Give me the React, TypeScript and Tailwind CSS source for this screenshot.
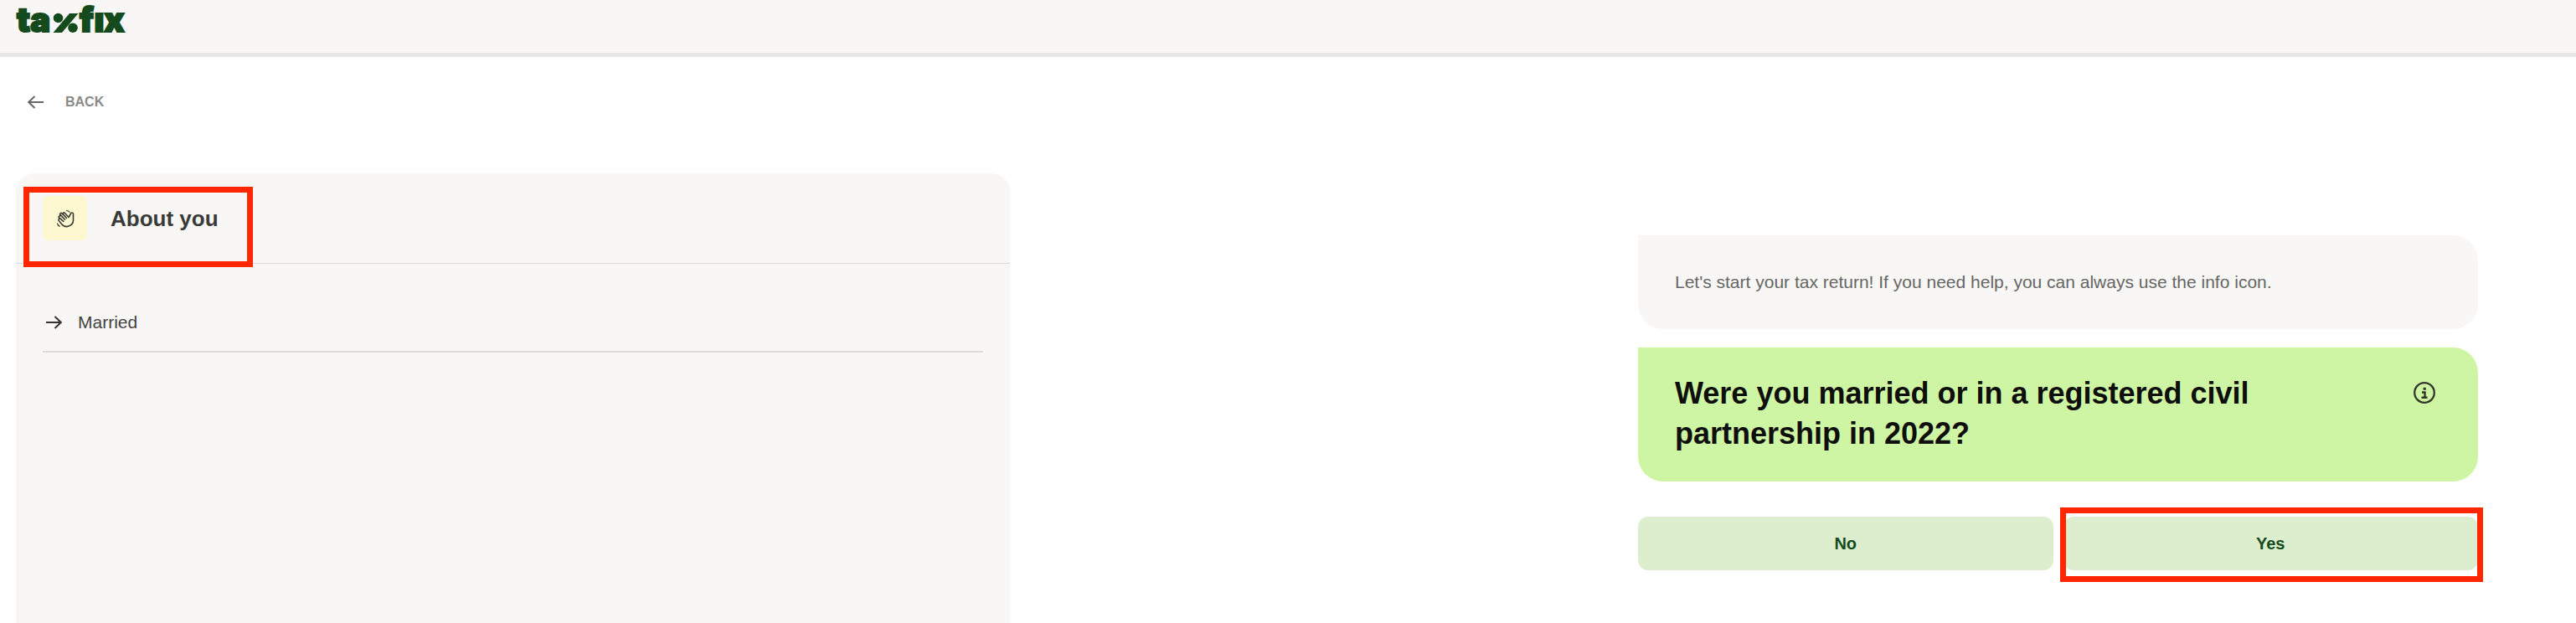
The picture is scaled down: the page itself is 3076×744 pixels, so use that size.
import React from 'react';

function Logo() {
  return (
    <svg
      className="h-[63px] w-[140px] text-[#154a1c]"
      viewBox="0 0 140 63"
      fill="currentColor"
      role="img"
      aria-label="taxfix"
    >
      <g className="font-['Inter',sans-serif] text-[40px] font-black" stroke="currentColor" strokeWidth="2">
        <text x="4" y="38">ta</text>
        <text x="79" y="38">fıx</text>
      </g>
      {/* Percent sign that stands in for the first x */}
      <circle cx="53.5" cy="21.5" r="5.8" />
      <circle cx="71" cy="33.2" r="5.8" />
      <path d="M47.5 39 67 16h10.500L58 39Z" />
    </svg>
  );
}

function WaveIcon() {
  return (
    <svg
      className="h-[22px] w-[22px] text-[#3a3a35]"
      viewBox="0 0 22 22"
      fill="none"
      stroke="currentColor"
      strokeWidth="1.6"
      strokeLinecap="round"
      strokeLinejoin="round"
      aria-hidden="true"
    >
      <path d="M15 9.5 10.2 4.3a1.3 1.3 0 0 0-2 1.6L7 4.8a1.3 1.3 0 0 0-1.9 1.8L4.9 7.8A1.3 1.3 0 0 0 3.4 9.7l.3 1.8a1.2 1.2 0 0 0-.6 1.7l3.4 4.2a7.8 7.8 0 0 0 14-4.6V5.7a1.5 1.5 0 0 0-3.2-.2L15 9.5" />
      <path d="m8.2 5.9 4.3 4.6M5.1 6.6l5.4 5.6M4.2 10.3l4.6 4.1" />
      <path d="M12.5 1.5c1.4.1 2.6.7 3.4 1.7M1.5 17c.4 1.6 1.3 2.7 2.8 3.3" strokeWidth="1.2" />
    </svg>
  );
}

function InfoIcon() {
  return (
    <svg className="h-[26px] w-[26px]" viewBox="0 0 26 26" fill="none" stroke="#33382b" aria-hidden="true">
      <circle cx="13" cy="13" r="11.8" strokeWidth="2.3" />
      <path d="M10 12.5h3.5v6M9.5 18.7h7" strokeWidth="2.4" />
      <path d="M11.6 6.8h3.2v3h-3.2z" fill="#33382b" stroke="none" />
    </svg>
  );
}

function Arrow({ className }: { className: string }) {
  return (
    <svg
      className={className}
      viewBox="0 0 20 16"
      fill="none"
      stroke="currentColor"
      strokeWidth="2"
      aria-hidden="true"
    >
      <path d="M0 8h18M10.5 1 17.8 8l-7.3 7" />
    </svg>
  );
}

// Red frame drawn over the part of the screen that needs attention
function Highlight({ className }: { className: string }) {
  return <div className={`pointer-events-none absolute border-[7px] border-[#ff2600] ${className}`} />;
}

function Sidebar() {
  return (
    <aside className="rounded-t-[22px] bg-[#f8f7f5]">
      <div className="relative flex h-27 items-center gap-7 border-b border-[#d9d9d7] px-8">
        <div className="flex h-[53px] w-[53px] items-center justify-center rounded-md bg-[#fdf8d0]">
          <WaveIcon />
        </div>
        <h2 className="text-[26px] leading-8 font-bold text-[#3a3a38]">About you</h2>
        <Highlight className="top-4 left-[9px] h-24 w-[274px]" />
      </div>

      <ul className="px-8 pt-9">
        <li className="border-b-2 border-[#dadad8] py-4">
          <a href="#married" className="flex h-9 items-center gap-[18px] pl-1 text-[21px] text-[#444442]">
            <Arrow className="h-4 w-5 text-[#33332f]" />
            Married
          </a>
        </li>
      </ul>
    </aside>
  );
}

function Question() {
  const answer = 'h-16 w-full rounded-xl bg-[#dceecd] text-xl font-bold text-[#154a1c]';

  return (
    <section className="pt-[74px]">
      <p className="flex h-28 items-center rounded-[30px] rounded-tl-none bg-[#f8f7f5] px-11 text-[21px] text-[#666664]">
        Let's start your tax return! If you need help, you can always use the info icon.
      </p>

      <div className="mt-[22px] flex items-start justify-between rounded-[30px] rounded-tl-none bg-[#cef5a4] pt-[31px] pr-[51px] pb-[33px] pl-11">
        <h1 className="max-w-[760px] text-4xl leading-[48px] font-bold text-[#0e0e0c]">
          Were you married or in a registered civil partnership in 2022?
        </h1>
        <button type="button" aria-label="More information" className="mt-2.5">
          <InfoIcon />
        </button>
      </div>

      <div className="mt-[42px] grid grid-cols-2 gap-3">
        <button type="button" className={answer}>No</button>
        <div className="relative">
          <button type="button" className={answer}>Yes</button>
          <Highlight className="-top-[11px] -right-1.5 -bottom-[14px] -left-1" />
        </div>
      </div>
    </section>
  );
}

export default function App() {
  return (
    <div className="flex min-h-screen flex-col bg-white font-['Liberation_Sans',Arial,sans-serif]">
      <header className="border-b-[5px] border-[#e6e6e6] bg-[#f8f7f5] px-4">
        <div className="flex">
          <Logo />
        </div>
      </header>

      <nav className="flex px-8 pt-10">
        <a href="#back" className="flex h-7 items-center gap-[26px] text-base font-bold text-[#8a8a88]">
          <Arrow className="h-4 w-5 rotate-180 text-[#666664]" />
          BACK
        </a>
      </nav>

      <main className="mt-[71px] grid flex-1 grid-cols-[1187fr_750fr_1003fr] pr-[117px] pl-[19px]">
        <Sidebar />
        <div />
        <Question />
      </main>
    </div>
  );
}
